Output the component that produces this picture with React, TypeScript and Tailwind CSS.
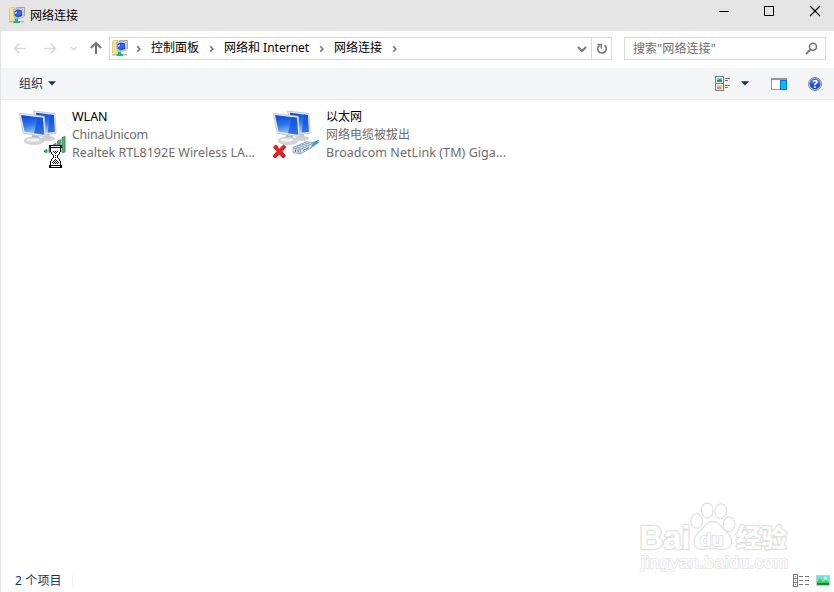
import React from "react";

function NetIcon({ id }: { id: string }) {
  return (
    <svg width="17" height="17" viewBox="0 0 17 17" className="block shrink-0">
      <defs>
        <linearGradient id={id} x1="0" y1="0" x2="1" y2="1">
          <stop offset="0" stopColor="#0a1fae" />
          <stop offset="0.5" stopColor="#2f62f0" />
          <stop offset="1" stopColor="#0619a0" />
        </linearGradient>
      </defs>
      <path d="M7.500 0.500h8v8.500h-8z" fill="#d5d9dc" stroke="#a3a8ad" />
      <path d="M9 2h5v5H9z" fill="#8194c4" />
      <path d="M0.500 1.500L2 0.500h3.500V13h-5z" fill="#f6e494" stroke="#dcc163" strokeWidth="0.800" />
      <path d="M4 2.500L12.500 1.500l1.500 1.500v7.500l-4.500 1-4.500-1.500z" fill="#e4e6e8" stroke="#a9aeb2" strokeWidth="0.800" />
      <path d="M5.500 4L9 2.500l4 0.800v5.700l-4 1.500L5.500 9z" fill={`url(#${id})`} />
      <path d="M9 4.500L12 4v4L9 9z" fill="#3c69e8" />
      <path d="M6 5l2-0.800v2L6 7z" fill="#b4c9ff" />
      <path d="M0 14h15v1.500H0z" fill="#b9bdbd" />
      <path d="M6 11.500h3V14h2v2H4.500v-2H6z" fill="#10c070" />
    </svg>
  );
}

function Chevron() {
  return (
    <svg width="6" height="8" viewBox="0 0 6 8" className="block shrink-0">
      <path d="M1.200 1.300L3.900 4 1.200 6.700" fill="none" stroke="#6e6e6e" strokeWidth="1.500" />
    </svg>
  );
}

function Caret() {
  return (
    <svg width="8" height="5" viewBox="0 0 8 5" className="block shrink-0">
      <path d="M0 0.300h8L4 4.500z" fill="#1b3354" />
    </svg>
  );
}

function Monitors({ id }: { id: string }) {
  return (
    <svg width="48" height="48" viewBox="0 0 48 48" className="block overflow-visible">
      <defs>
        <linearGradient id={id} x1="0.3" y1="0" x2="0.5" y2="1">
          <stop offset="0" stopColor="#0c48d2" />
          <stop offset="0.5" stopColor="#2f78ec" />
          <stop offset="1" stopColor="#a6d0fc" />
        </linearGradient>
      </defs>
      <ellipse cx="28" cy="29.500" rx="7" ry="2.500" fill="#cfd2d5" />
      <path d="M25 24l5 1v4l-5-1z" fill="#c7cbce" />
      <path d="M13.500 2L35 4.500 36 24.500 18 26z" fill="#e4e7ea" stroke="#bcc2c7" strokeWidth="0.800" />
      <path d="M16 3.800L33.800 6 34.800 23 18 24z" fill={`url(#${id})`} />
      <path d="M30 5.500l3.800 0.500 1 17-7 0.400z" fill="#0f4fda" opacity="0.750" />
      <path d="M12 26l7 1 1 5H11z" fill="#b4b9bd" />
      <ellipse cx="14" cy="31.800" rx="10" ry="3.800" fill="#d3d6d8" stroke="#bcc0c4" strokeWidth="0.500" />
      <ellipse cx="13" cy="31" rx="6.500" ry="1.600" fill="#f1f2f3" />
      <path d="M-0.800 4.300L24.200 7.300 26 27.700 3.300 24.300z" fill="#eceff1" stroke="#b8c0c7" strokeWidth="0.800" />
      <path d="M1 6L22.800 8.700 24.300 25.700 4.500 22.800z" fill={`url(#${id})`} />
      <path d="M18 8.100l4.800 0.600 1.500 17-10.300-1.500z" fill="#0f4fda" opacity="0.750" />
    </svg>
  );
}

function WifiBadge() {
  return (
    <svg width="22" height="18" viewBox="0 0 22 18" className="absolute left-[24px] top-[27px]">
      <g fill="#62ad80" stroke="#2c8455" strokeWidth="0.900">
        <path d="M0.500 14.500l2.500-1v3l-2.500-0.500z" />
        <path d="M5 12l2.500-1v6L5 16.500z" />
        <path d="M9.500 8.500l2.500-1v9.500H9.500z" />
        <path d="M13.500 5l2.800-1.200V17h-2.800z" />
        <path d="M18 1.800l3-1.300V16l-3 0.500z" />
      </g>
    </svg>
  );
}

function Hourglass() {
  return (
    <svg width="15" height="23" viewBox="0 0 15 23" shapeRendering="crispEdges" className="absolute left-[28px] top-[36px]">
      <path d="M2 3h11v5l-3 3v1l3 3v5H2v-5l3-3v-1L2 8z" fill="#fff" />
      <path d="M1 0h13v3H1zM1 20h13v3H1zM2 3h1v4H2zM12 3h1v4h-1zM3 7h1v2H3zM11 7h1v2h-1zM4 9h1v1H4zM10 9h1v1h-1zM5 10h1v3H5zM9 10h1v3H9zM4 13h1v1H4zM10 13h1v1h-1zM3 14h1v2H3zM11 14h1v2h-1zM2 16h1v4H2zM12 16h1v4h-1z" fill="#000" />
      <path d="M3 1h9v1H3zM3 21h9v1H3z" fill="#fff" />
      <path d="M5 6h1v1H5zM7 6h1v1H7zM9 6h1v1H9zM6 7h1v1H6zM8 7h1v1H8zM7 8h1v1H7zM7 10h1v1H7zM7 12h1v1H7zM7 14h1v1H7zM6 15h1v1H6zM8 15h1v1H8zM5 16h1v1H5zM7 16h1v1H7zM9 16h1v1H9zM4 17h1v1H4zM6 17h1v1H6zM8 17h1v1H8zM10 17h1v1h-1zM5 18h1v1H5zM7 18h1v1H7zM9 18h1v1H9z" fill="#000" />
    </svg>
  );
}

function CableBadge() {
  return (
    <svg width="48" height="22" viewBox="0 0 48 22" className="absolute -left-[2px] top-[29px]">
      <path d="M1.500 9l2.500-2 3.300 4.200L11.500 7l2.300 1.800-4 4.700 3.700 4.500-2.200 2-4-4L3 20l-2-1.800 4-4.700z" fill="#ee2020" stroke="#b70d12" strokeWidth="0.900" />
      <path d="M37 6l10-4-2.500 2.500 2 0-7 5z" fill="#29a7db" stroke="#147eae" strokeWidth="0.500" />
      <path d="M21 9.500L35 3.500l6 1.500-2 5-11 6-7-1.500z" fill="#dbe5ee" stroke="#8496a8" strokeWidth="0.800" />
      <path d="M21.500 10l7 1.500-0.500 4.500M28.500 11.500L40 5.500" fill="none" stroke="#718ba5" strokeWidth="0.800" />
      <path d="M24 8.800l5 1.200M27 7.500l5 1M30 6.300l5 1M33 5l4 0.800" stroke="#6d8094" strokeWidth="0.700" />
      <path d="M23.500 11.500v2.500M26 12v2.500M31 12.500l6-3" stroke="#4b6f94" strokeWidth="1" />
    </svg>
  );
}

function Connection({ id, name, status, device, wifi }: { id: string; name: string; status: string; device: string; wifi?: boolean }) {
  return (
    <div className="flex w-[254px]">
      <div className="relative mr-[4px] h-[60px] w-[48px] shrink-0">
        <Monitors id={id} />
        {wifi ? (<><WifiBadge /><Hourglass /></>) : <CableBadge />}
      </div>
      <div className={`-mt-px whitespace-nowrap text-[12.5px] leading-[18px] text-[#6d6d6d] ${wifi ? "tracking-[-0.02px]" : "tracking-[0.06px]"}`}>
        <div className={wifi ? "text-black" : "text-[12px] tracking-normal text-black"}>{name}</div>
        <div className={wifi ? "tracking-[-0.28px]" : "text-[12px] tracking-normal"}>{status}</div>
        <div>{device}</div>
      </div>
    </div>
  );
}

function Watermark() {
  return (
    <svg width="156" height="76" viewBox="0 0 156 76" className="pointer-events-none absolute left-[637px] top-[499px]">
      <g fill="#fff" stroke="#e2e2e2" strokeWidth="1.300">
        <ellipse cx="59.700" cy="22" rx="5.800" ry="7.300" />
        <ellipse cx="70.300" cy="11.500" rx="5.800" ry="7.500" />
        <ellipse cx="83.700" cy="12.300" rx="5.800" ry="7.500" transform="rotate(8 84 12)" />
        <ellipse cx="92" cy="25.300" rx="5.800" ry="7.300" />
        <path d="M75.500 22.500c-5 0-7 3-10 7-4 4-8.500 7-8.500 13 0 5 3.500 8 8 8 4 0 7-1 10.500-1s6.500 1 10.500 1c5 0 8.500-3 8.500-8 0-6-4.500-9-8.500-13-3-4-5.500-7-10.500-7z" />
      </g>
      <g fill="#fff" stroke="#e2e2e2" strokeWidth="2.600" strokeLinejoin="round" style={{ paintOrder: "stroke" }}>
        <text x="2.500" y="49.500" fontFamily="Liberation Sans, Arial, sans-serif" fontWeight="700" fontSize="33" textLength="51" lengthAdjust="spacingAndGlyphs">Bai</text>
        <text x="62.500" y="46.500" strokeWidth="2" fontFamily="Liberation Sans, Arial, sans-serif" fontWeight="700" fontSize="19" textLength="24" lengthAdjust="spacingAndGlyphs">du</text>
        <text x="99" y="47.500" fontFamily="Noto Sans CJK SC, sans-serif" fontWeight="700" fontSize="25.500" textLength="51">经验</text>
        <text x="4" y="68.500" stroke="#e8e8e8" strokeWidth="2" fontFamily="Liberation Sans, Arial, sans-serif" fontSize="17" textLength="147">jingyan.baidu.com</text>
      </g>
    </svg>
  );
}

export default function App() {
  return (
    <div className="relative flex h-[592px] w-[834px] flex-col overflow-hidden bg-white text-[12px] leading-[18px] text-black [font-family:'Noto_Sans','Noto_Sans_CJK_SC',sans-serif]">
      <header className="flex h-[31px] shrink-0 items-start bg-[#e5e5e5]">
        <div className="ml-[9px] mt-[7px]"><NetIcon id="title-net" /></div>
        <span className="ml-[4px] mt-[7px]">网络连接</span>
        <svg width="120" height="24" viewBox="0 0 120 24" className="ml-auto" fill="none" stroke="#000" strokeWidth="1">
          <path d="M5 11.500h10M50.500 6.500h9v9h-9z" shapeRendering="crispEdges" />
          <path d="M96 6l10 10M106 6L96 16" strokeWidth="1.200" />
        </svg>
      </header>
      <div className="flex min-h-0 flex-1 flex-col border-l border-[#e5e5e5]">
        <nav className="flex h-[37px] shrink-0 items-start pt-[6px]">
          <svg width="108" height="23" viewBox="1 0 108 23" className="block shrink-0" fill="none">
            <path d="M14.500 11.500H26M19.500 6.500l-5 5 5 5M44 11.500h11.500M50.500 6.500l5 5-5 5" stroke="#d9d9d9" strokeWidth="1.700" />
            <path d="M71 10l2.700 2.700L76.400 10" stroke="#d5d5d5" strokeWidth="1.400" />
            <path d="M96 17V6M90.800 11L96 5.800l5.200 5.200" stroke="#777" strokeWidth="2" />
          </svg>
          <div className="flex h-[23px] w-[503px] items-center border border-[#d9d9d9]">
            <div className="ml-[2px]"><NetIcon id="address-net" /></div>
            <div className="ml-[7px]"><Chevron /></div>
            <span className="ml-[9px] w-[48px] -mt-[2px] whitespace-nowrap">控制面板</span>
            <div className="ml-[10px]"><Chevron /></div>
            <span className="ml-[9px] w-[86px] -mt-[2px] whitespace-nowrap">网络和 Internet</span>
            <div className="ml-[9px]"><Chevron /></div>
            <span className="ml-[9px] w-[48px] -mt-[2px] whitespace-nowrap">网络连接</span>
            <div className="ml-[10px]"><Chevron /></div>
            <svg width="10" height="8" viewBox="0 0 10 8" className="ml-auto mr-[4px]" fill="none">
              <path d="M1 2l4 4 4-4" stroke="#777" strokeWidth="2" />
            </svg>
            <div className="flex h-full w-[20px] items-center justify-center border-l border-[#d9d9d9]">
              <svg width="12" height="14" viewBox="0 0 12 14" fill="none" stroke="#777" strokeWidth="1.700">
                <path d="M8.500 3.200A4.300 4.300 0 1 1 3.500 3.200" />
                <path d="M1.500 2.500h3.800v4" strokeWidth="1.500" />
              </svg>
            </div>
          </div>
          <div className="ml-[12px] flex h-[23px] w-[202px] items-center justify-between border border-[#d9d9d9] pl-[8px] pr-[7px] text-[#6d6d6d]">
            <span className="tracking-[0.12px]">搜索"网络连接"</span>
            <svg width="13" height="13" viewBox="0 0 13 13" fill="none" stroke="#777">
              <circle cx="8" cy="4.800" r="3.500" strokeWidth="1.600" />
              <path d="M5.500 7.500L1 12" strokeWidth="2" />
            </svg>
          </div>
        </nav>
        <div className="flex h-[32px] shrink-0 items-center border-b border-[#e8e9eb] bg-[#f4f5f7] pl-[18px] text-[#1b3354]">
          <span>组织</span>
          <div className="ml-[5px]"><Caret /></div>
          <svg width="16" height="16" viewBox="0 0 16 16" className="ml-auto" shapeRendering="crispEdges">
            <path d="M0.500 0.500h8v14h-8zM0 7.500h9" fill="#fff" stroke="#777" />
            <path d="M2 2h5v4H2z" fill="#6edbe8" /><path d="M2 4h2V3h2v1h1v2H2z" fill="#16a34a" />
            <path d="M2 9h5v4H2z" fill="#79dce7" /><path d="M2 11h2v-1h2v3H2z" fill="#f28a35" /><path d="M4 9h2v2H4z" fill="#f5da43" />
            <path d="M10 2.500h5M10 4.500h3M10 9.500h5M10 11.500h3" stroke="#777" />
          </svg>
          <div className="ml-[10px]"><Caret /></div>
          <svg width="16" height="12" viewBox="0 0 16 12" className="ml-[22px]" shapeRendering="crispEdges">
            <path d="M0 0h16v12H0z" fill="#999" /><path d="M1 2h8v9H1z" fill="#fff" />
            <path d="M9.500 2.500h6v9h-6z" fill="#00bcf2" stroke="#0078d7" />
          </svg>
          <svg width="14" height="14" viewBox="0 0 14 14" className="ml-[21px] mr-[12px]">
            <circle cx="7" cy="7" r="6.500" fill="#d6d7db" stroke="#85878c" />
            <circle cx="7" cy="7" r="5.400" fill="#244fc0" />
            <path d="M2 6a5 5 0 0 1 10 0Q7 8 2 6z" fill="#6d93e5" opacity="0.5" />
            <text x="7" y="11" textAnchor="middle" fontSize="11" fontWeight="700" fill="#fff">?</text>
          </svg>
        </div>
        <main className="flex flex-1 items-start pl-[19px] pt-[9px]">
          <Connection id="wlan-screen" name="WLAN" status="ChinaUnicom" device="Realtek RTL8192E Wireless LA..." wifi />
          <Connection id="lan-screen" name="以太网" status="网络电缆被拔出" device="Broadcom NetLink (TM) Giga..." />
        </main>
        <footer className="flex h-[23px] shrink-0 items-center pl-[14px] text-[#1b3354]">
          <span className="w-[57px] whitespace-nowrap tracking-[0.150px]">2 个项目</span>
          <span className="h-[11px] w-px bg-[#eeeeee]" />
          <svg width="16" height="13" viewBox="0 0 16 13" className="ml-auto" shapeRendering="crispEdges">
            <path d="M0.500 0.500h4v12h-4zM0 4.500h5M0 8.500h5" fill="#fff" stroke="#777" />
            <path d="M2 2h1v1H2z" fill="#287d40" /><path d="M2 6h1v1H2z" fill="#c33" /><path d="M2 10h1v1H2z" fill="#258ed0" />
            <path d="M6 2.500h4M12 2.500h4M6 6.500h4M12 6.500h4M6 10.500h4M12 10.500h4" stroke="#777" />
          </svg>
          <svg width="14" height="11" viewBox="0 0 14 11" className="ml-[7px] mr-[4px]">
            <path d="M0.500 0.500h13v10H0.500z" fill="#68e0f5" stroke="#c1cbd0" />
            <circle cx="9.500" cy="3" r="1.500" fill="#fff08a" />
            <path d="M1 7l3-4 3 4 3-2 3 2v3H1z" fill="#3bd23b" /><path d="M1 8h12v2H1z" fill="#148447" />
          </svg>
        </footer>
      </div>
      <Watermark />
    </div>
  );
}
